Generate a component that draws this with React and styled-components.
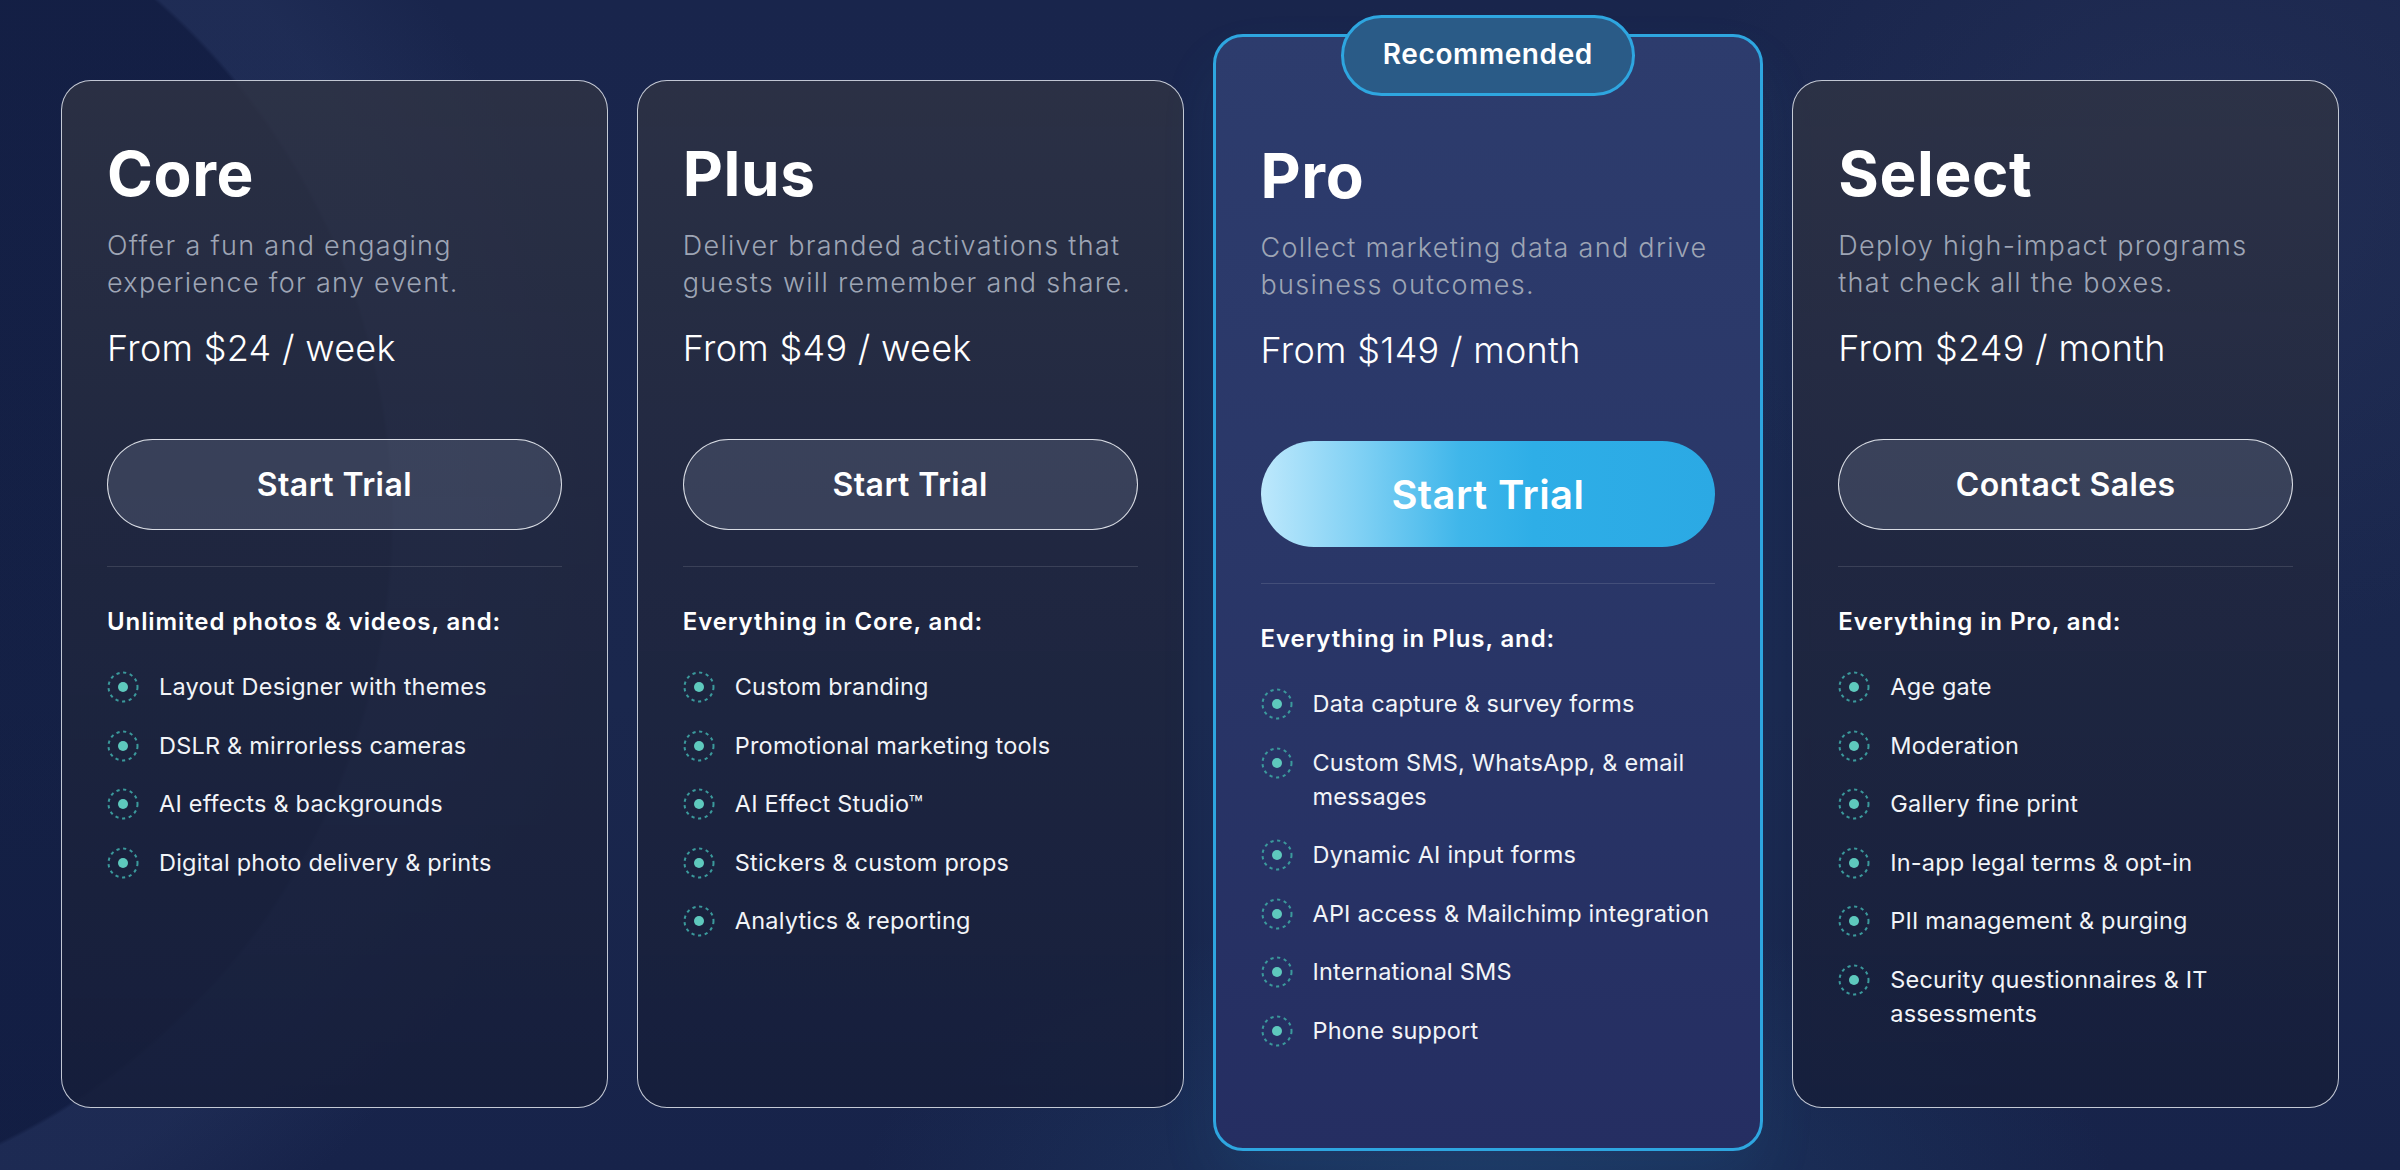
import React from "react";
import styled, { createGlobalStyle, css } from "styled-components";

const Global = createGlobalStyle`
  html, body { margin: 0; padding: 0; }
  body {
    background: #18244a;
    font-family: Inter, "Open Sans", "Liberation Sans", sans-serif;
    color: #fff;
    -webkit-font-smoothing: antialiased;
  }
  * { box-sizing: border-box; }
`;

const Page = styled.main`
  position: relative;
  width: 2400px;
  height: 1170px;
  overflow: hidden;
  background:
    radial-gradient(ellipse 900px 420px at 1488px 1200px, rgba(40, 90, 140, 0.35), rgba(40, 90, 140, 0) 70%),
    radial-gradient(circle at -300px 520px, rgba(10, 20, 55, 0.35) 0 690px, rgba(60, 80, 130, 0.16) 694px 760px, rgba(255,255,255,0) 900px),
    radial-gradient(ellipse 700px 600px at 2200px 200px, rgba(50, 62, 100, 0.35), rgba(50, 62, 100, 0) 75%),
    linear-gradient(180deg, #19254c 0%, #1a274d 60%, #17234a 100%);
`;

const Row = styled.div`
  display: flex;
  align-items: stretch;
  gap: 29px;
  padding: 80px 61px 0;
`;

const Card = styled.section`
  position: relative;
  flex: 1 1 0;
  min-width: 0;
  display: flex;
  flex-direction: column;
  border-radius: 30px;
  ${(p) =>
    p.$featured
      ? css`
          margin: -46px 0 -43px;
          padding: 108px 45px 100px;
          border: 3px solid #2ea6e0;
          background: linear-gradient(180deg, #2d3c6d 0%, #2a3768 45%, #252e62 100%);
          box-shadow: 0 30px 60px rgba(46, 166, 224, 0.08);
        `
      : css`
          padding: 62px 45px 76px;
          border: 1.5px solid rgba(225, 229, 238, 0.85);
          background: linear-gradient(180deg, rgba(48, 52, 68, 0.82) 0%, rgba(34, 40, 62, 0.8) 45%, rgba(22, 30, 58, 0.85) 100%);
        `}
`;

const Badge = styled.div`
  position: absolute;
  top: -22px;
  left: 50%;
  transform: translateX(-50%);
  width: 294px;
  height: 81px;
  border-radius: 41px;
  border: 3px solid #2ea6e0;
  background: #2a5b87;
  display: flex;
  align-items: center;
  justify-content: center;
  font-size: 28px;
  font-weight: 600;
  letter-spacing: 0.6px;
  color: #fff;
  padding-bottom: 4px;
`;

const Title = styled.h2`
  margin: 0;
  font-size: 62px;
  line-height: 62px;
  font-weight: 700;
  letter-spacing: 0.01em;
  color: #fff;
`;

const Desc = styled.p`
  margin: 22px 0 0;
  font-size: 27px;
  line-height: 37px;
  font-weight: 300;
  color: #9ea5b5;
  letter-spacing: 1.3px;
`;

const Price = styled.div`
  margin-top: 26px;
  font-size: 36px;
  line-height: 43px;
  font-weight: 300;
  letter-spacing: 0.3px;
  color: #fff;
`;

const Button = styled.button`
  margin-top: 69px;
  width: 100%;
  border-radius: 999px;
  font-family: inherit;
  color: #fff;
  font-weight: 600;
  cursor: pointer;
  display: flex;
  align-items: center;
  justify-content: center;
  letter-spacing: 0.4px;
  ${(p) =>
    p.$primary
      ? css`
          height: 106px;
          font-size: 40px;
          border: none;
          background: linear-gradient(90deg, #bde8fc 0%, #7fd0f4 22%, #3fb6ea 44%, #2eaee7 60%, #2ba9e4 100%);
        `
      : css`
          height: 91px;
          font-size: 32px;
          border: 1.5px solid rgba(235, 238, 244, 0.9);
          background: rgba(120, 130, 155, 0.28);
        `}
`;

const Divider = styled.hr`
  margin: 36px 0 0;
  border: none;
  height: 1px;
  background: rgba(255, 255, 255, 0.12);
`;

const ListTitle = styled.h3`
  margin: 39px 0 0;
  font-size: 24px;
  line-height: 31px;
  font-weight: 600;
  letter-spacing: 0.9px;
  color: #fff;
`;

const List = styled.ul`
  list-style: none;
  margin: 33px 0 0;
  padding: 0;
  display: flex;
  flex-direction: column;
  gap: 24.5px;
`;

const Item = styled.li`
  display: flex;
  align-items: flex-start;
  gap: 19px;
  font-size: 23.5px;
  line-height: 34px;
  font-weight: 400;
  letter-spacing: 0.2px;
  color: #f2f4f8;
`;

const IconWrap = styled.span`
  flex: 0 0 34px;
  height: 34px;
  display: flex;
  align-items: center;
  justify-content: center;
  margin-left: -1px;
`;

const Dot = () => (
  <IconWrap>
    <svg width="34" height="34" viewBox="0 0 34 34" aria-hidden="true">
      <circle cx="17" cy="17" r="14.5" fill="none" stroke="#3b9a9c" strokeWidth="2" strokeDasharray="3.2 3.6" />
      <circle cx="17" cy="17" r="5" fill="#5ec9bd" />
    </svg>
  </IconWrap>
);

const plans = [
  {
    name: "Core",
    desc: "Offer a fun and engaging experience for any event.",
    price: "From $24 / week",
    cta: "Start Trial",
    heading: "Unlimited photos & videos, and:",
    items: ["Layout Designer with themes", "DSLR & mirrorless cameras", "AI effects & backgrounds", "Digital photo delivery & prints"],
  },
  {
    name: "Plus",
    desc: "Deliver branded activations that guests will remember and share.",
    price: "From $49 / week",
    cta: "Start Trial",
    heading: "Everything in Core, and:",
    items: ["Custom branding", "Promotional marketing tools", "AI Effect Studio™", "Stickers & custom props", "Analytics & reporting"],
  },
  {
    name: "Pro",
    featured: true,
    desc: "Collect marketing data and drive business outcomes.",
    price: "From $149 / month",
    cta: "Start Trial",
    heading: "Everything in Plus, and:",
    items: [
      "Data capture & survey forms",
      "Custom SMS, WhatsApp, & email messages",
      "Dynamic AI input forms",
      "API access & Mailchimp integration",
      "International SMS",
      "Phone support",
    ],
  },
  {
    name: "Select",
    desc: "Deploy high-impact programs that check all the boxes.",
    price: "From $249 / month",
    cta: "Contact Sales",
    heading: "Everything in Pro, and:",
    items: [
      "Age gate",
      "Moderation",
      "Gallery fine print",
      "In-app legal terms & opt-in",
      "PII management & purging",
      "Security questionnaires & IT assessments",
    ],
  },
];

export default function App() {
  return (
    <>
      <Global />
      <Page>
        <Row>
          {plans.map((p) => (
            <Card key={p.name} $featured={p.featured}>
              {p.featured && <Badge>Recommended</Badge>}
              <Title>{p.name}</Title>
              <Desc>{p.desc}</Desc>
              <Price>{p.price}</Price>
              <Button $primary={p.featured}>{p.cta}</Button>
              <Divider />
              <ListTitle>{p.heading}</ListTitle>
              <List>
                {p.items.map((it) => (
                  <Item key={it}>
                    <Dot />
                    <span>{it}</span>
                  </Item>
                ))}
              </List>
            </Card>
          ))}
        </Row>
      </Page>
    </>
  );
}
